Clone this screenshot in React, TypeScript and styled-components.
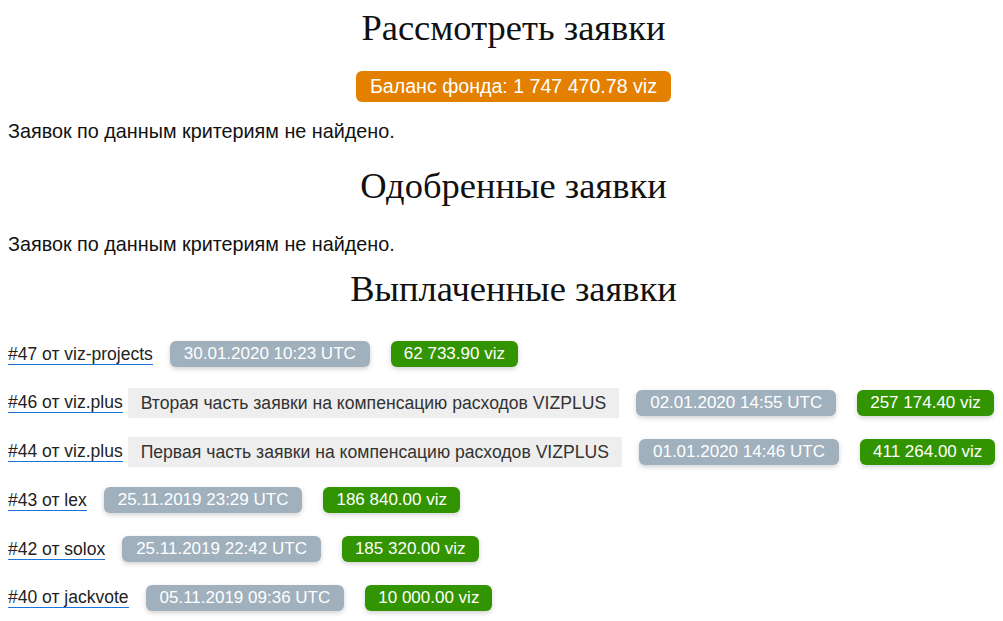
import * as React from 'react';
import styled, { createGlobalStyle } from 'styled-components';

const GlobalStyle = createGlobalStyle`
  html, body {
    overflow-x: hidden;
  }
  body {
    margin: 0;
    background: #fff;
    font-family: "Liberation Sans", Arial, sans-serif;
    font-size: 17px;
    color: #111;
  }
`;

// the page content is a little wider than the window, so centred titles sit right of middle
const Page = styled.div`
  width: 1011px;
  padding: 0 8px;
  display: flex;
  flex-direction: column;
`;

const Heading = styled.h2<{ $top: number }>`
  font-family: "Liberation Serif", "Times New Roman", serif;
  font-weight: normal;
  font-size: 36.5px;
  text-align: center;
  margin: ${(p) => p.$top}px 0 0;
  line-height: 40px;
  color: #111;
`;

const BalanceRow = styled.div`
  display: flex;
  justify-content: center;
  margin-top: 23px;
`;

const Balance = styled.span`
  background: #e38000;
  color: #fff;
  font-size: 19.6px;
  line-height: 31px;
  padding: 0 14px;
  border-radius: 6px;
`;

const Empty = styled.p<{ $top: number }>`
  margin: ${(p) => p.$top}px 0 0;
  font-size: 19.8px;
  line-height: 24px;
`;

const List = styled.div`
  margin-top: 30px;
`;

const Row = styled.div`
  display: flex;
  align-items: center;
  height: 30px;
  margin-bottom: 18.8px;
`;

const Link = styled.a`
  color: #222;
  font-size: 17.5px;
  text-decoration: none;
  border-bottom: 1px solid #1a73d9;
  line-height: 20px;
  margin-right: 5px;
`;

const Note = styled.span`
  background: #eeeeee;
  color: #333;
  font-size: 17.6px;
  line-height: 30px;
  padding: 0 13px;
  margin-right: 5px;
`;

const Badge = styled.span<{ $tone: 'date' | 'amount' }>`
  background: ${(p) => (p.$tone === 'date' ? '#a0b0bd' : '#329400')};
  color: #fff;
  line-height: 26px;
  padding: ${(p) => (p.$tone === 'date' ? '0 14px' : '0 13px')};
  border-radius: 6px;
  box-shadow: 0 2px 5px rgba(0, 0, 0, 0.18);
  margin: ${(p) => (p.$tone === 'date' ? '0 12px' : '0 0 0 9px')};
`;

type Payout = {
  id: number;
  author: string;
  note?: string;
  date: string;
  amount: string;
};

const payouts: Payout[] = [
  { id: 47, author: 'viz-projects', date: '30.01.2020 10:23 UTC', amount: '62 733.90 viz' },
  {
    id: 46,
    author: 'viz.plus',
    note: 'Вторая часть заявки на компенсацию расходов VIZPLUS',
    date: '02.01.2020 14:55 UTC',
    amount: '257 174.40 viz',
  },
  {
    id: 44,
    author: 'viz.plus',
    note: 'Первая часть заявки на компенсацию расходов VIZPLUS',
    date: '01.01.2020 14:46 UTC',
    amount: '411 264.00 viz',
  },
  { id: 43, author: 'lex', date: '25.11.2019 23:29 UTC', amount: '186 840.00 viz' },
  { id: 42, author: 'solox', date: '25.11.2019 22:42 UTC', amount: '185 320.00 viz' },
  { id: 40, author: 'jackvote', date: '05.11.2019 09:36 UTC', amount: '10 000.00 viz' },
];

const App = () => {
  return (
    <Page>
      <GlobalStyle />
      <Heading $top={8}>Рассмотреть заявки</Heading>
      <BalanceRow>
        <Balance>Баланс фонда: 1 747 470.78 viz</Balance>
      </BalanceRow>
      <Empty $top={17}>Заявок по данным критериям не найдено.</Empty>
      <Heading $top={23}>Одобренные заявки</Heading>
      <Empty $top={26}>Заявок по данным критериям не найдено.</Empty>
      <Heading $top={13}>Выплаченные заявки</Heading>
      <List>
        {payouts.map((p) => (
          <Row key={p.id}>
            <Link href="#">
              #{p.id} от {p.author}
            </Link>
            {p.note && <Note>{p.note}</Note>}
            <Badge $tone="date">{p.date}</Badge>
            <Badge $tone="amount">{p.amount}</Badge>
          </Row>
        ))}
      </List>
    </Page>
  );
};

export default App;
